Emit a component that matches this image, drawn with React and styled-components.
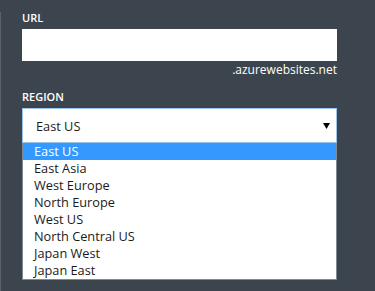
import React from 'react'
import styled, { createGlobalStyle } from 'styled-components'

const regions = [
  'East US',
  'East Asia',
  'West Europe',
  'North Europe',
  'West US',
  'North Central US',
  'Japan West',
  'Japan East',
]

const App = () => {
  const selected = 'East US'
  return (
    <Page>
      <GlobalStyle />
      <Panel>
        <Field>
          <Label>URL</Label>
          <TextInput type="text" />
          <Suffix>.azurewebsites.net</Suffix>
        </Field>
        <Field>
          <Label>REGION</Label>
          <SelectBox>
            <SelectValue>{selected}</SelectValue>
            <Arrow viewBox="0 0 7 6">
              <path d="M0 0 L7 0 L3.5 6 Z" />
            </Arrow>
          </SelectBox>
          <OptionList>
            {regions.map((name) => (
              <Option key={name} $active={name === selected}>
                {name}
              </Option>
            ))}
          </OptionList>
        </Field>
      </Panel>
    </Page>
  )
}

const GlobalStyle = createGlobalStyle`
  html, body {
    margin: 0;
    padding: 0;
    background: #3c454d;
  }
  body {
    font-family: "Open Sans", "Noto Sans", "Liberation Sans", sans-serif;
  }
`

const Page = styled.div`
  height: 291px;
  padding-top: 12px;
  box-sizing: border-box;
  background: #3c454d;
  overflow: hidden;
`

const Panel = styled.div`
  height: 100%;
  border-left: 1px solid #59626b;
  padding-left: 21px;
  box-sizing: border-box;
`

const Field = styled.div`
  width: 315px;
  display: flex;
  flex-direction: column;
  & + & {
    margin-top: 13px;
  }
`

const Label = styled.div`
  color: #ffffff;
  font-size: 11px;
  font-weight: 600;
  line-height: 16px;
  margin-bottom: 3px;
  margin-top: -2px;
`

const TextInput = styled.input`
  height: 32px;
  width: 100%;
  box-sizing: border-box;
  border: none;
  outline: none;
  margin: 0;
  padding: 0 12px;
  background: #ffffff;
`

const Suffix = styled.div`
  align-self: flex-end;
  color: #ffffff;
  font-size: 12px;
  line-height: 16px;
  margin-top: 1px;
`

const SelectBox = styled.div`
  height: 35px;
  box-sizing: border-box;
  display: flex;
  align-items: center;
  justify-content: space-between;
  padding: 0 6px 0 13px;
  background: #ffffff;
  border: 1px solid #9cc3ea;
`

const SelectValue = styled.span`
  color: #1a1a1a;
  font-size: 12.75px;
`

const Arrow = styled.svg`
  width: 7px;
  height: 6px;
  fill: #000000;
`

const OptionList = styled.div`
  display: flex;
  flex-direction: column;
  background: #ffffff;
  border: 1px solid #7c8a98;
  border-top: none;
`

const Option = styled.div`
  height: 17px;
  line-height: 17px;
  padding-left: 11px;
  font-size: 12.75px;
  color: ${(props) => (props.$active ? '#ffffff' : '#1a1a1a')};
  background: ${(props) => (props.$active ? '#3399ff' : 'transparent')};
`

export default App
